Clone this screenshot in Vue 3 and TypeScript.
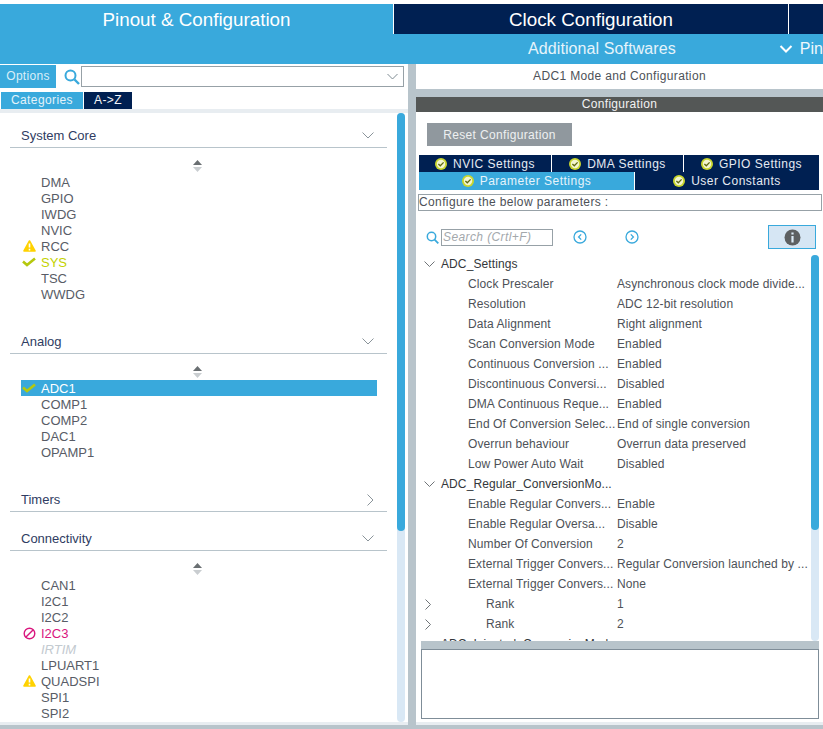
<script setup lang="ts">
type PeripheralState = 'none' | 'warn' | 'ok' | 'error' | 'off'

type Peripheral = {
  name: string
  state?: PeripheralState
  selected?: boolean
}

type Category = {
  title: string
  open: boolean
  items: Peripheral[]
  cls: string
}

type Param = {
  label: string
  value?: string
  group?: boolean
  expandable?: boolean
  rank?: boolean
}

const categories: Category[] = [
  {
    title: 'System Core',
    open: true,
    cls: 'cat--core',
    items: [
      { name: 'DMA' },
      { name: 'GPIO' },
      { name: 'IWDG' },
      { name: 'NVIC' },
      { name: 'RCC', state: 'warn' },
      { name: 'SYS', state: 'ok' },
      { name: 'TSC' },
      { name: 'WWDG' },
    ],
  },
  {
    title: 'Analog',
    open: true,
    cls: 'cat--analog',
    items: [
      { name: 'ADC1', state: 'ok', selected: true },
      { name: 'COMP1' },
      { name: 'COMP2' },
      { name: 'DAC1' },
      { name: 'OPAMP1' },
    ],
  },
  { title: 'Timers', open: false, cls: 'cat--timers', items: [] },
  {
    title: 'Connectivity',
    open: true,
    cls: 'cat--conn',
    items: [
      { name: 'CAN1' },
      { name: 'I2C1' },
      { name: 'I2C2' },
      { name: 'I2C3', state: 'error' },
      { name: 'IRTIM', state: 'off' },
      { name: 'LPUART1' },
      { name: 'QUADSPI', state: 'warn' },
      { name: 'SPI1' },
      { name: 'SPI2' },
    ],
  },
]

const params: Param[] = [
  { label: 'ADC_Settings', group: true },
  { label: 'Clock Prescaler', value: 'Asynchronous clock mode divide...' },
  { label: 'Resolution', value: 'ADC 12-bit resolution' },
  { label: 'Data Alignment', value: 'Right alignment' },
  { label: 'Scan Conversion Mode', value: 'Enabled' },
  { label: 'Continuous Conversion ...', value: 'Enabled' },
  { label: 'Discontinuous Conversi...', value: 'Disabled' },
  { label: 'DMA Continuous Reque...', value: 'Enabled' },
  { label: 'End Of Conversion Selec...', value: 'End of single conversion' },
  { label: 'Overrun behaviour', value: 'Overrun data preserved' },
  { label: 'Low Power Auto Wait', value: 'Disabled' },
  { label: 'ADC_Regular_ConversionMo...', group: true },
  { label: 'Enable Regular Convers...', value: 'Enable' },
  { label: 'Enable Regular Oversa...', value: 'Disable' },
  { label: 'Number Of Conversion', value: '2' },
  { label: 'External Trigger Convers...', value: 'Regular Conversion launched by ...' },
  { label: 'External Trigger Convers...', value: 'None' },
  { label: 'Rank', value: '1', expandable: true, rank: true },
  { label: 'Rank', value: '2', expandable: true, rank: true },
  { label: 'ADC_Injected_ConversionMode', group: true },
]

const topTabs = ['NVIC Settings', 'DMA Settings', 'GPIO Settings']
</script>

<template>
  <div class="app">
    <header class="header">
      <div class="nav">
        <div class="nav__tab nav__tab--pinout">Pinout &amp; Configuration</div>
        <div class="nav__tab nav__tab--clock">Clock Configuration</div>
        <div class="nav__tab nav__tab--rest"></div>
      </div>
      <div class="subnav">
        <span class="subnav__title">Additional Softwares</span>
        <span class="subnav__pin">
          <svg width="14" height="10" viewBox="0 0 14 10"><path d="M1.5 2 L7 7.5 L12.5 2" fill="none" stroke="#fff" stroke-width="2" /></svg>
          Pin
        </span>
      </div>
    </header>

    <main class="main">
      <section class="left">
        <div class="options">
          <div class="options__btn">Options</div>
          <svg class="options__icon" width="16" height="16" viewBox="0 0 16 16">
            <circle cx="6.5" cy="6.5" r="5" fill="none" stroke="#39a9dc" stroke-width="2" />
            <path d="M10.5 10.5 L15 15" stroke="#39a9dc" stroke-width="2.4" />
          </svg>
          <div class="options__input">
            <svg width="11" height="7" viewBox="0 0 11 7"><path d="M.5 1 L5.5 6 L10.5 1" fill="none" stroke="#7f8b92" stroke-width="1" /></svg>
          </div>
        </div>
        <div class="sort">
          <div class="sort__btn sort__btn--on">Categories</div>
          <div class="sort__btn sort__btn--off">A-&gt;Z</div>
        </div>
        <div class="strip"></div>
        <div class="list-wrap">
          <div class="list">
            <div v-for="cat in categories" :key="cat.title" class="cat" :class="cat.cls">
              <div class="cat__head">
                <span>{{ cat.title }}</span>
                <svg v-if="cat.open" width="12" height="7" viewBox="0 0 12 7"><path d="M.5 .5 L6 6 L11.5 .5" fill="none" stroke="#8a949a" stroke-width="1" /></svg>
                <svg v-else width="7" height="12" viewBox="0 0 7 12"><path d="M.5 .5 L6 6 L.5 11.5" fill="none" stroke="#8a949a" stroke-width="1" /></svg>
              </div>
              <template v-if="cat.open">
                <div class="cat__sort">
                  <svg width="9" height="12" viewBox="0 0 9 12">
                    <path d="M4.5 0 L9 5 H0 Z" fill="#6a6f72" />
                    <path d="M0 7 H9 L4.5 12 Z" fill="#c9cdd0" />
                  </svg>
                </div>
                <div
                  v-for="item in cat.items"
                  :key="item.name"
                  class="item"
                  :class="[item.state ? `item--${item.state}` : '', { 'item--selected': item.selected }]"
                >
                  <span class="item__icon">
                    <svg v-if="item.state === 'warn'" width="13" height="12" viewBox="0 0 13 12">
                      <path d="M6.5 1 L12 11 H1 Z" fill="#ffd200" stroke="#ffd200" stroke-width="1.6" stroke-linejoin="round" />
                      <path d="M6.5 3.5 V7.6 M6.5 8.8 V10.4" stroke="#fff" stroke-width="1.6" />
                    </svg>
                    <svg v-else-if="item.state === 'ok'" width="14" height="10" viewBox="0 0 14 10">
                      <path d="M1 4.5 L5 8 L13 1.5" fill="none" stroke="#b5c80e" stroke-width="2.6" />
                    </svg>
                    <svg v-else-if="item.state === 'error'" width="13" height="13" viewBox="0 0 13 13">
                      <circle cx="6.5" cy="6.5" r="5.3" fill="none" stroke="#d9167e" stroke-width="1.4" />
                      <path d="M3 10 L10 3" stroke="#d9167e" stroke-width="1.4" />
                    </svg>
                  </span>
                  <span class="item__name">{{ item.name }}</span>
                </div>
              </template>
            </div>
          </div>
          <div class="scroll scroll--left"><div class="scroll__thumb"></div></div>
        </div>
        <div class="strip strip--bottom"></div>
      </section>

      <section class="right">
        <div class="right__title">ADC1 Mode and Configuration</div>
        <div class="right__gap"></div>
        <div class="right__head">Configuration</div>
        <div class="right__body">
          <button class="reset">Reset Configuration</button>
          <div class="tabs">
            <div class="tabs__row">
              <div v-for="tab in topTabs" :key="tab" class="tab">
                <svg width="12" height="12" viewBox="0 0 12 12"><circle cx="6" cy="6" r="6" fill="#c8d62e" /><circle cx="6" cy="6" r="4.2" fill="#f3f6cf" /><path d="M3.4 6 L5.3 7.8 L8.6 4.4" fill="none" stroke="#5f6a10" stroke-width="1.3" /></svg>
                {{ tab }}
              </div>
            </div>
            <div class="tabs__row tabs__row--two">
              <div class="tab tab--active">
                <svg width="12" height="12" viewBox="0 0 12 12"><circle cx="6" cy="6" r="6" fill="#c8d62e" /><circle cx="6" cy="6" r="4.2" fill="#f3f6cf" /><path d="M3.4 6 L5.3 7.8 L8.6 4.4" fill="none" stroke="#5f6a10" stroke-width="1.3" /></svg>
                Parameter Settings
              </div>
              <div class="tab">
                <svg width="12" height="12" viewBox="0 0 12 12"><circle cx="6" cy="6" r="6" fill="#c8d62e" /><circle cx="6" cy="6" r="4.2" fill="#f3f6cf" /><path d="M3.4 6 L5.3 7.8 L8.6 4.4" fill="none" stroke="#5f6a10" stroke-width="1.3" /></svg>
                User Constants
              </div>
            </div>
          </div>
          <div class="configure">Configure the below parameters :</div>
          <div class="toolbar">
            <svg class="toolbar__search" width="13" height="13" viewBox="0 0 13 13">
              <circle cx="5.5" cy="5.5" r="4.2" fill="none" stroke="#39a9dc" stroke-width="1.5" />
              <path d="M8.6 8.6 L12.3 12.3" stroke="#39a9dc" stroke-width="1.8" />
            </svg>
            <div class="toolbar__input">Search (Crtl+F)</div>
            <svg class="toolbar__prev" width="14" height="14" viewBox="0 0 14 14">
              <circle cx="7" cy="7" r="6" fill="none" stroke="#39a9dc" stroke-width="1.3" />
              <path d="M8.2 4.4 L5.6 7 L8.2 9.6" fill="none" stroke="#39a9dc" stroke-width="1.3" />
            </svg>
            <svg class="toolbar__next" width="14" height="14" viewBox="0 0 14 14">
              <circle cx="7" cy="7" r="6" fill="none" stroke="#39a9dc" stroke-width="1.3" />
              <path d="M5.8 4.4 L8.4 7 L5.8 9.6" fill="none" stroke="#39a9dc" stroke-width="1.3" />
            </svg>
            <div class="toolbar__info">
              <svg width="17" height="17" viewBox="0 0 17 17">
                <circle cx="8.5" cy="8.5" r="8" fill="#5d6062" />
                <path d="M8.5 3.4 V5.4 M8.5 7 V13.4" stroke="#dcebf7" stroke-width="2.2" />
              </svg>
            </div>
          </div>
          <div class="tree-wrap">
            <div class="tree">
              <div
                v-for="(row, i) in params"
                :key="i"
                class="row"
                :class="{ 'row--group': row.group, 'row--rank': row.rank }"
              >
                <span class="row__twist">
                  <svg v-if="row.group" width="11" height="7" viewBox="0 0 11 7"><path d="M.5 .5 L5.5 5.5 L10.5 .5" fill="none" stroke="#6f7478" stroke-width="1" /></svg>
                  <svg v-else-if="row.expandable" width="7" height="11" viewBox="0 0 7 11"><path d="M.5 .5 L5.5 5.5 L.5 10.5" fill="none" stroke="#6f7478" stroke-width="1" /></svg>
                </span>
                <span class="row__label">{{ row.label }}</span>
                <span class="row__value">{{ row.value }}</span>
              </div>
            </div>
            <div class="scroll scroll--right"><div class="scroll__thumb scroll__thumb--right"></div></div>
          </div>
          <div class="splitter"></div>
          <div class="desc"></div>
        </div>
        <div class="strip"></div>
      </section>
    </main>
    <div class="footer"></div>
  </div>
</template>

<style scoped>
.app {
  width: 823px;
  height: 729px;
  overflow: hidden;
  display: flex;
  flex-direction: column;
  background: #fff;
  font-family: "Liberation Sans", Arial, sans-serif;
  font-size: 12px;
  color: #4d5157;
}

.header {
  padding-top: 4px;
  flex: none;
}

.nav {
  display: flex;
  height: 30px;
}

.nav__tab {
  display: flex;
  align-items: center;
  justify-content: center;
  font-size: 18.8px;
  color: #fff;
  padding-top: 2px;
  box-sizing: border-box;
}

.nav__tab--pinout {
  width: 393px;
  background: #39a9dc;
}

.nav__tab--clock {
  width: 394px;
  margin-left: 1px;
  background: #002052;
}

.nav__tab--rest {
  flex: 1;
  margin-left: 1px;
  background: #002052;
}

.subnav {
  height: 30px;
  background: #39a9dc;
  color: #e6f4fb;
  font-size: 16px;
  display: flex;
  align-items: center;
}

.subnav__title {
  flex: none;
  margin-left: 528px;
  letter-spacing: .1px;
  white-space: nowrap;
}

.subnav__pin {
  flex: none;
  margin-left: 103px;
  display: flex;
  align-items: center;
  gap: 7px;
  white-space: nowrap;
  color: #f0f8fc;
}

.main {
  flex: 1;
  min-height: 0;
  display: flex;
  background: #b8c4cb;
  gap: 8px;
}

.left {
  width: 408px;
  background: #fff;
  display: flex;
  flex-direction: column;
}

.options {
  display: flex;
  align-items: center;
  height: 24px;
  padding-top: 1px;
  box-sizing: border-box;
}

.options__btn {
  width: 56px;
  height: 23px;
  line-height: 23px;
  text-align: center;
  background: #39a9dc;
  color: #d8eef8;
  letter-spacing: .3px;
}

.options__icon {
  margin-left: 8px;
}

.options__input {
  width: 323px;
  height: 21px;
  margin-left: 1px;
  box-sizing: border-box;
  border: 1px solid #97a1a7;
  display: flex;
  align-items: center;
  justify-content: flex-end;
  padding-right: 5px;
}

.sort {
  display: flex;
  gap: 1px;
  margin: 4px 0 0 1px;
  height: 17px;
}

.sort__btn {
  line-height: 17px;
  text-align: center;
  letter-spacing: .4px;
}

.sort__btn--on {
  width: 82px;
  background: #39a9dc;
  color: #e3f3fa;
}

.sort__btn--off {
  width: 48px;
  background: #002052;
  color: #f4f6f9;
}

.strip {
  height: 4px;
  flex: none;
  background: #e8edf1;
}

.strip--bottom {
  height: 3px;
}

.list-wrap {
  flex: 1;
  min-height: 0;
  position: relative;
}

.list {
  padding-top: 10px;
  height: 100%;
  box-sizing: border-box;
  overflow: hidden;
}

.cat__head {
  margin: 0 21px 0 10px;
  padding: 1px 13px 0 11px;
  height: 25px;
  box-sizing: border-box;
  border-bottom: 1px solid #b8c4cb;
  display: flex;
  align-items: center;
  justify-content: space-between;
  color: #2f3c62;
  font-size: 13px;
}

.cat__sort {
  display: flex;
  justify-content: center;
  width: 394px;
  padding: 12px 0 2px;
}

.cat__sort svg {
  display: block;
}

.cat--analog {
  margin-top: 27px;
}

.cat--timers {
  margin-top: 27px;
}

.cat--conn {
  margin-top: 14px;
}

.item {
  height: 16px;
  margin: 0 31px 0 21px;
  display: flex;
  align-items: center;
  color: #585c66;
  font-size: 13px;
}

.item__icon {
  width: 20px;
  flex: none;
  display: flex;
  justify-content: center;
  padding-right: 4px;
  box-sizing: border-box;
}

.item--selected {
  background: #39a9dc;
  color: #fff;
}

.item--ok:not(.item--selected) {
  color: #c4d200;
}

.item--error {
  color: #d9167e;
}

.item--off {
  color: #c3cad0;
  font-style: italic;
}

.scroll {
  position: absolute;
  width: 8px;
  background: #d9e8f5;
  border-radius: 4px;
}

.scroll--left {
  right: 3px;
  top: 0;
  bottom: 0;
}

.scroll__thumb {
  height: 418px;
  background: #39a9dc;
  border-radius: 4px;
}

.scroll__thumb--right {
  height: 275px;
}

.right {
  flex: 1;
  min-width: 0;
  background: #fff;
  display: flex;
  flex-direction: column;
}

.right__title {
  height: 25px;
  line-height: 25px;
  text-align: center;
  background: #fff;
  letter-spacing: .35px;
}

.right__gap {
  height: 8px;
  background: #b8c4cb;
}

.right__head {
  height: 15px;
  line-height: 15px;
  background: #545756;
  color: #f2f2f2;
  text-align: center;
  letter-spacing: .3px;
}

.right__body {
  flex: 1;
  min-height: 0;
  display: flex;
  flex-direction: column;
  padding: 11px 1px 0 2px;
}

.reset {
  width: 145px;
  height: 23px;
  margin-left: 9px;
  border: 0;
  padding: 0;
  background: #90989e;
  color: #eef0f1;
  font: inherit;
  letter-spacing: .35px;
  flex: none;
}

.tabs {
  margin: 9px 3px 0 1px;
  flex: none;
}

.tabs__row {
  display: grid;
  grid-template-columns: 132px 131px 1fr;
  gap: 1px;
  height: 17px;
}

.tabs__row--two {
  grid-template-columns: 215px 1fr;
  height: 18px;
}

.tab {
  background: #002052;
  color: #e6ebf2;
  display: flex;
  align-items: center;
  justify-content: center;
  gap: 6px;
  letter-spacing: .5px;
}

.tab--active {
  background: #39a9dc;
  color: #e6f4fb;
}

.configure {
  margin-top: 4px;
  height: 17px;
  box-sizing: border-box;
  border: 1px solid #97a1a7;
  line-height: 15px;
  letter-spacing: .38px;
  flex: none;
}

.toolbar {
  display: flex;
  align-items: center;
  height: 24px;
  margin-top: 14px;
  flex: none;
}

.toolbar__search {
  margin-left: 8px;
}

.toolbar__input {
  width: 112px;
  height: 17px;
  margin-left: 2px;
  box-sizing: border-box;
  border: 1px solid #97a1a7;
  line-height: 15px;
  padding-left: 1px;
  color: #a3a8ac;
  font-style: italic;
  letter-spacing: .4px;
}

.toolbar__prev {
  margin-left: 20px;
}

.toolbar__next {
  margin-left: 38px;
}

.toolbar__info {
  width: 48px;
  height: 24px;
  margin-left: 129px;
  box-sizing: border-box;
  border: 1px solid #39a9dc;
  background: #d6e6f4;
  display: flex;
  align-items: center;
  justify-content: center;
}

.tree-wrap {
  position: relative;
  flex: none;
  height: 387px;
  margin-top: 5px;
}

.tree {
  height: 100%;
  overflow: hidden;
}

.row {
  height: 20px;
  display: flex;
  align-items: center;
  white-space: nowrap;
  letter-spacing: .1px;
}

.row__twist {
  width: 50px;
  flex: none;
  padding-left: 6px;
  box-sizing: border-box;
  display: flex;
  align-items: center;
}

.row__label {
  width: 149px;
  flex: none;
}

.row__value {
  white-space: nowrap;
}

.row--group .row__twist {
  width: 23px;
}

.row--group .row__label {
  width: auto;
  color: #33373b;
}

.row--rank .row__twist {
  padding-left: 7px;
}

.row--rank .row__label {
  padding-left: 18px;
  box-sizing: border-box;
}

.scroll--right {
  right: 3px;
  top: 1px;
  bottom: 0;
}

.splitter {
  height: 8px;
  margin: 0 3px;
  background: #b8c4cb;
  flex: none;
}

.desc {
  height: 70px;
  margin: 0 3px;
  box-sizing: border-box;
  border: 1px solid #7f8d98;
  flex: none;
}

.right > .strip {
  height: 3px;
}

.footer {
  flex: none;
  height: 4px;
  background: #b8c4cb;
}
</style>
